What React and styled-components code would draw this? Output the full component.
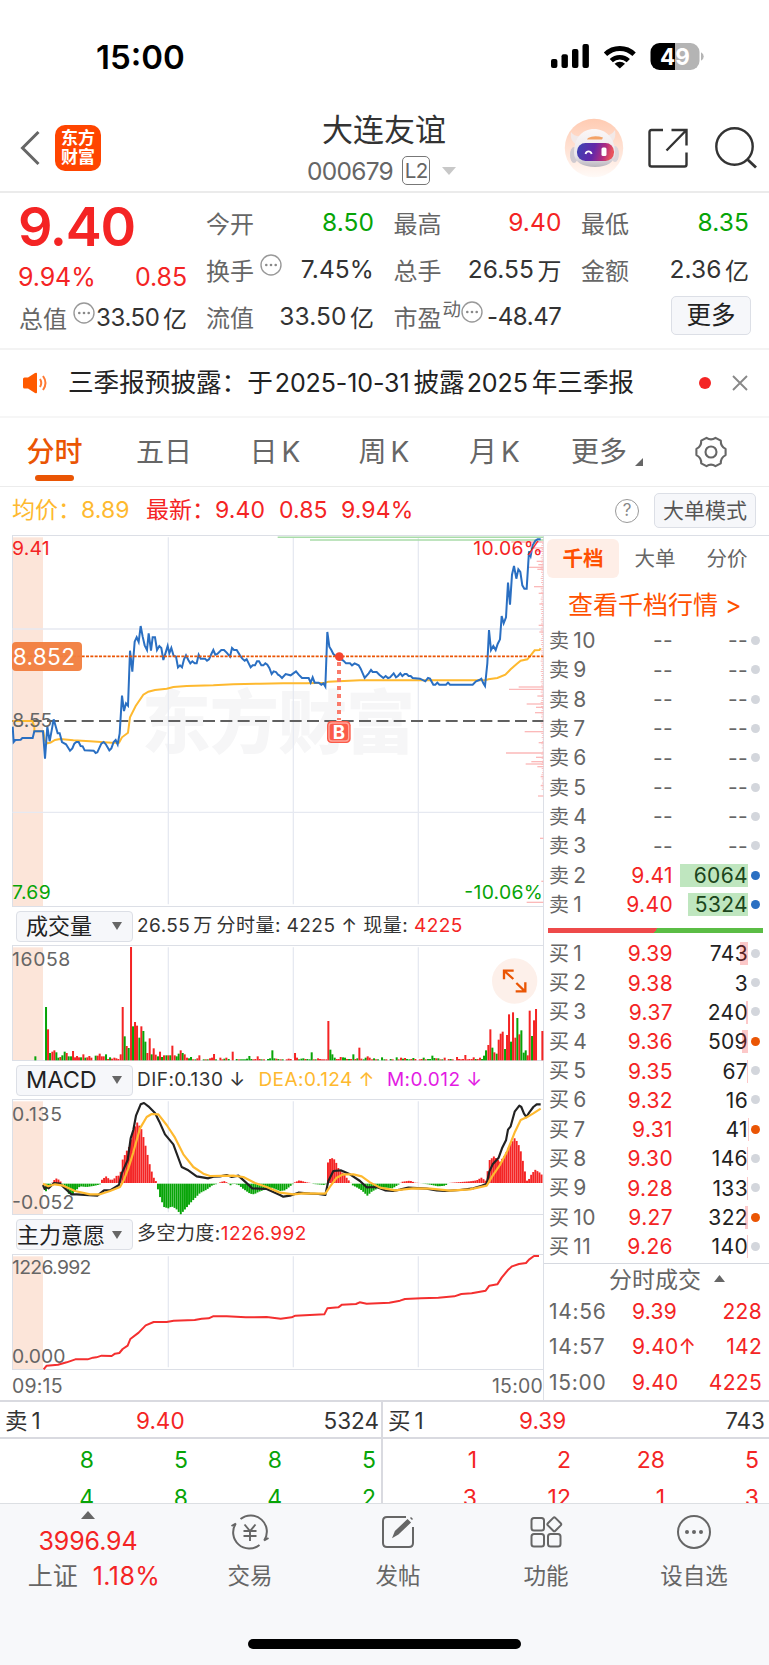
import React from 'react';
import styled, { createGlobalStyle, css } from 'styled-components';

const RED = '#f42424';
const GREEN = '#07a407';
const ORANGE = '#ea5504';
const GOLD = '#feb92f';

const quoteCells = [
    { label: '今开', value: '8.50', color: GREEN },
    { label: '最高', value: '9.40', color: RED },
    { label: '最低', value: '8.35', color: GREEN },
    { label: '换手', value: '7.45%', hint: true },
    { label: '总手', value: '26.55', unit: '万' },
    { label: '金额', value: '2.36', unit: '亿' },
    { label: '流值', value: '33.50', unit: '亿' },
    { label: '市盈', value: '-48.47', hint: true, sup: '动', tight: true },
];

const asks = [
    ...[10, 9, 8, 7, 6, 5, 4, 3].map(n => ({ n, price: '--', volume: '--', empty: true, dot: '#d3d6dc' })),
    { n: 2, price: '9.41', volume: '6064', bar: 68, dot: '#2a6fc2' },
    { n: 1, price: '9.40', volume: '5324', bar: 60, dot: '#2a6fc2' },
];

const bids = [
    ['9.39', 743, 8], ['9.38', 3, 0], ['9.37', 240, 2], ['9.36', 509, 6, true],
    ['9.35', 67, 1], ['9.32', 16, 0], ['9.31', 41, 0.5, true], ['9.30', 146, 1],
    ['9.28', 133, 1], ['9.27', 322, 3, true], ['9.26', 140, 1],
].map(([price, volume, bar, hot], i) => ({ n: i + 1, price, volume, bar, dot: hot ? '#ea5504' : '#d3d6dc' }));

const trades = [
    { time: '14:56', price: '9.39', volume: '228' },
    { time: '14:57', price: '9.40↑', volume: '142' },
    { time: '15:00', price: '9.40', volume: '4225' },
];

// chart coordinates are in thirds of a pixel
const priceLine = '38,590 41,636 46,630 62,629 67,624 98,624 103,604 129,604 135,686 142,590 149,634 161,568 173,610 179,610 186,636 198,643 210,662 217,655 223,641 229,636 236,636 242,648 248,649 254,661 281,662 287,669 292,667 304,641 311,636 317,642 328,661 334,655 341,636 347,630 353,643 359,610 366,497 372,543 378,520 384,527 390,362 397,425 404,335 410,322 416,336 422,288 428,320 434,346 441,360 446,310 453,362 458,322 465,322 471,360 478,348 484,354 490,390 497,368 503,348 508,370 514,354 521,378 528,380 534,412 540,406 546,412 552,388 558,376 565,390 571,400 577,394 584,400 590,400 596,374 602,386 615,386 621,392 627,388 634,372 640,360 646,374 652,372 664,360 672,360 680,368 690,380 696,354 702,360 710,360 720,376 727,386 734,392 740,388 746,400 752,412 758,406 765,406 771,394 777,394 784,406 790,406 796,400 802,404 808,414 815,432 821,424 828,426 834,434 838,436 846,444 857,432 865,434 872,436 880,430 888,424 896,434 906,444 926,444 932,458 938,442 944,458 956,458 964,464 970,460 976,470 982,306 988,350 994,360 1000,372 1010,380 1030,392 1038,400 1050,400 1056,406 1064,400 1076,406 1082,416 1094,444 1106,430 1113,420 1118,426 1130,426 1138,434 1150,444 1157,438 1164,444 1170,442 1181,430 1188,442 1194,438 1201,430 1207,438 1214,432 1220,432 1226,438 1232,438 1238,444 1260,446 1276,454 1284,444 1290,446 1300,464 1306,464 1312,458 1318,464 1338,464 1344,458 1350,464 1418,464 1428,454 1438,450 1444,446 1450,460 1455,468 1462,400 1467,300 1473,360 1480,348 1487,360 1493,342 1500,328 1505,258 1511,280 1518,262 1524,158 1530,224 1536,134 1542,108 1549,146 1555,118 1561,126 1567,166 1573,176 1580,176 1587,64 1592,78 1598,46 1606,32 1613,28 1622,28';
const avgLine = '38,573 97,573 103,590 103,604 130,604 134,630 142,640 152,638 165,630 180,627 220,631 270,634 335,638 357,638 366,622 384,608 390,562 407,528 430,494 445,485 465,480 500,476 520,471 560,468 640,466 700,463 780,461 850,460 920,460 976,458 985,455 1080,451 1455,451 1465,448 1492,444 1516,434 1532,418 1550,402 1562,392 1582,388 1592,376 1604,361 1618,360 1622,355';
const difLine = '129,840 134,852 140,846 146,850 162,834 180,836 195,850 214,868 230,868 292,872 312,856 330,856 357,840 365,806 383,765 392,700 400,675 408,632 422,598 432,594 445,604 465,624 478,650 495,688 520,718 545,786 565,796 590,814 625,820 640,815 660,814 680,810 695,816 715,812 735,830 757,850 800,852 840,870 850,875 870,872 895,863 930,866 955,867 976,870 985,828 1000,798 1022,796 1050,808 1080,828 1100,847 1130,846 1155,856 1180,858 1200,854 1225,848 1280,851 1310,856 1335,858 1380,855 1420,850 1445,842 1460,836 1468,800 1478,778 1496,758 1506,730 1518,706 1524,674 1532,664 1544,620 1558,602 1564,606 1572,626 1579,636 1588,622 1600,606 1610,598 1622,598';
const deaLine = '129,836 145,844 165,838 190,842 225,858 270,868 300,868 330,858 360,846 372,824 385,790 400,742 420,670 440,636 455,627 475,628 500,660 525,698 550,748 580,786 610,806 630,813 700,812 730,816 765,834 800,846 840,863 880,868 910,865 976,866 990,845 1010,818 1030,808 1060,808 1085,814 1110,832 1140,848 1185,856 1240,850 1290,851 1350,857 1410,853 1460,842 1478,812 1500,780 1522,738 1545,680 1562,645 1580,637 1600,625 1622,611';
const willLine = '131,463 140,452 174,449 200,442 226,433 263,433 279,428 289,427 305,422 335,423 345,416 358,414 368,402 383,392 391,372 416,353 437,331 461,321 500,321 521,317 584,315 605,311 626,310 639,304 680,304 737,307 800,306 842,311 875,307 886,302 973,298 982,280 1015,277 1026,269 1068,267 1079,262 1100,266 1168,263 1200,257 1215,252 1263,250 1315,248 1363,244 1384,237 1415,235 1457,227 1468,212 1492,208 1505,188 1523,166 1536,154 1557,147 1578,144 1587,134 1602,123 1617,123';

const volumeData = `106g12 138g160 144r93 150g22 157r26 163r30 169g24 175g8 181r10 187g15 194g26 200r22 206g12 213g12 219r28 225r9
231r13 237r9 243g9 250r18 256g8 262r9 268r13 274r8 287g14 293r14 299r20 305r12 311r12 318g18 324r4 330g9 336r5 343r8
349r6 355r4 362r18 368r160 374g72 380r43 386g37 393r340 399g102 405r115 411r104 418g68 424r102 430g88 436g56 442r22
449r66 455g18 461r36 467r17 474g12 480r26 486g10 492r15 499g15 505r15 511g15 517r44 524r15 530g12 536g20 542r30 548g22
554r18 561r8 567g6 573g10 579r3 586g3 592r6 598r15 611g3 617r3 623g3 630r6 636r8 642r19 648g3 661r8 667r3 673g5 679r8
686g4 698r26 710g4 717r3 723g3 729g3 735g3 741g5 748g13 754g4 760r3 766r4 773r12 779r4 785g3 792r3 804g4 810g6 817g30
823g6 829r5 835g4 842r3 848g3 860r3 866r5 872r4 885r22 891r8 897g3 904g5 910g6 916r4 922g4 929g3 935g24 941r3 947g3
954r6 960r4 966r3 972r3 979r3 985r118 991g32 997g18 1004g8 1010r4 1016r4 1022r10 1029g9 1035g8 1041r4 1047g4 1053r4
1060g18 1066r4 1072g6 1078r38 1084r5 1091g3 1097g8 1103r12 1109r8 1116r3 1122g6 1128r3 1134g3 1146g9 1153g3 1159r3
1172g4 1178r3 1190g9 1196r3 1203r8 1209g5 1215r7 1221g4 1228g3 1234r4 1240g7 1246r4 1259r3 1265r4 1271g8 1277r3 1284g4
1290g4 1297g14 1303g7 1309r6 1315g6 1321r3 1327g3 1334r8 1346r4 1352g4 1358r3 1371r10 1377r4 1383r3 1389r4 1396r16
1402r3 1408r4 1415r4 1421r9 1427g4 1433r4 1440r8 1446g4 1452g14 1458g30 1465r46 1471r93 1477g38 1483r24 1490g20 1496r62
1502r80 1508r86 1515g34 1521r76 1527r138 1533g56 1539r144 1546r68 1552g127 1558r78 1564g90 1571g23 1577g30 1583r15
1589r149 1596g73 1602r120 1608r154 1627r88`;

const histogram = [
    [130, 0], [136, -28], [142, -12], [152, -6], [160, 6], [168, 14], [176, 10], [184, 2], [190, -4], [198, -10], [206, -30],
    [218, -34], [228, -20], [240, -8], [260, -10], [280, -7], [298, -3], [303, 0], [306, 10], [318, 20], [330, 10], [340, 10],
    [350, 22], [360, 22], [368, 70], [380, 96], [388, 110], [400, 160], [412, 182], [425, 160], [437, 110], [450, 52],
    [460, 18], [470, 2], [472, -10], [480, -40], [492, -70], [505, -74], [515, -68], [528, -75], [542, -92], [556, -76],
    [575, -54], [600, -28], [620, -18], [638, -4], [655, 0], [672, 6], [684, 0], [692, -5], [700, 0], [716, -4], [730, -16],
    [750, -30], [762, -32], [775, -25], [800, -16], [815, -12], [840, -22], [855, -20], [870, -8], [880, 0], [898, 8],
    [920, 2], [940, -1], [975, -4], [980, 0], [983, 60], [990, 72], [998, 75], [1006, 68], [1014, 46], [1025, 34], [1035, 22],
    [1046, 8], [1056, -4], [1072, -12], [1085, -20], [1102, -36], [1115, -24], [1135, -13], [1160, -12], [1178, -14],
    [1195, -3], [1208, 4], [1230, 7], [1245, 1], [1275, -1], [1285, -2], [1300, -5], [1315, -8], [1335, -6], [1345, 0],
    [1370, 2], [1410, 5], [1430, 8], [1444, 16], [1458, 6], [1462, 30], [1468, 68], [1482, 80], [1500, 64], [1515, 84],
    [1528, 112], [1545, 136], [1560, 106], [1570, 60], [1578, 18], [1583, 0], [1590, 20], [1605, 40], [1618, 32], [1630, 20],
];

const chips = [
    [36, 96], [54, 40], [64, 20], [94, 20], [104, 15], [112, 43], [118, 18], [170, 28], [190, 14], [222, 12], [286, 14],
    [306, 12], [471, 74], [478, 103], [498, 18], [522, 50], [532, 22], [548, 25], [573, 16], [605, 56], [638, 14], [669, 112],
    [682, 22], [695, 36], [702, 53], [710, 18], [740, 8], [767, 8], [798, 16], [925, 10], [1054, 6], [1117, 50],
];

const volumeBars = volumeData.split(/\s+/).map(item => {
    const [, x, side, h] = item.match(/(\d+)([rg])(\d+)/);
    return { x: +x, h: +h, color: side === 'r' ? RED : GREEN };
});

const valueAt = (points, x) => {
    const i = points.findIndex(([px]) => px >= x);
    if (i <= 0) return 0;
    const [x0, v0] = points[i - 1];
    const [x1, v1] = points[i];
    return v0 + ((v1 - v0) * (x - x0)) / (x1 - x0);
};

const histBars = Array.from({ length: 240 }, (_, i) => {
    const x = 138 + i * 6.22;
    return { x, v: valueAt(histogram, x) };
});

function Grid({ top, bottom }) {
    return (
        <g>
            <rect x="37" y={top + 7} width="92" height={bottom - top - 9} fill="#fce5d9" />
            {[505, 880, 1255].map(x => (
                <path key={x} d={`M${x} ${top + 7}V${bottom - 8}`} stroke="#e6e9f1" strokeWidth="4" />
            ))}
            <path d={`M37.5 ${top}V${bottom}`} stroke="#dcdfe6" strokeWidth="3" />
            <path d={`M36 ${top + 1.5}H1632M36 ${bottom - 1.5}H1632`} stroke="#dcdfe6" strokeWidth="3" />
        </g>
    );
}

function PriceChart() {
    return (
        <Chart height={372} viewBox="36 15 1596 1116">
            <Watermark x="425" y="653" textLength="820">东方财富</Watermark>
            <Grid top={15} bottom={1131} />
            <path d="M37 297H1630M37 847H1630" stroke="#e6e9f1" strokeWidth="4" />
            <path d="M833 22H1630M930 30H1630" stroke="#a9dca9" strokeWidth="4.5" />
            {chips.map(([y, w]) => (
                <path key={y} d={`M${1630 - w} ${y}H1630`} stroke="#fbb9b9" strokeWidth="4" />
            ))}
            {Array.from({ length: 120 }, (_, i) => (
                <path key={i} d={`M${1628 - ((i * 7) % 5) - (i < 90 ? 2 : 0)} ${40 + i * 6.2}H1630`} stroke="#fbb9b9" strokeWidth="3" />
            ))}
            <path d="M37 573H1630" stroke="#606060" strokeWidth="6" strokeDasharray="36 16" />
            <polyline points={avgLine} fill="none" stroke={GOLD} strokeWidth="6" />
            <polyline points={priceLine} fill="none" stroke="#2a6fc2" strokeWidth="6" />
            <path d="M37 379H1630" stroke={ORANGE} strokeWidth="5.5" strokeDasharray="9 4" />
            <path d="M1017 396V570" stroke="#fa7b6b" strokeWidth="12" strokeDasharray="12 12" />
            <circle cx="1018" cy="380" r="13" fill="#f5442f" />
            <rect x="981" y="573" width="71" height="66" rx="13" fill="#fb5b49" />
            <rect x="987" y="579" width="59" height="54" rx="9" fill="none" stroke="#ffa79c" strokeWidth="4" />
            <BuyMark x="1017" y="626">B</BuyMark>
            <ChartText x="36" y="74" fill={RED} textLength="113">9.41</ChartText>
            <ChartText x="36" y="1107" fill={GREEN} textLength="116">7.69</ChartText>
            <ChartText x="37" y="590" fill="#666" textLength="120">8.55</ChartText>
            <ChartText x="1628" y="74" fill={RED} textAnchor="end" textLength="208">10.06%</ChartText>
            <ChartText x="1628" y="1107" fill={GREEN} textAnchor="end" textLength="235">-10.06%</ChartText>
            <rect x="36" y="336" width="210" height="87" rx="12" fill="#f17f40" fillOpacity=".96" />
            <PriceTag x="38" y="405" textLength="187">8.852</PriceTag>
        </Chart>
    );
}

function VolumeChart() {
    return (
        <Chart height={116} viewBox="36 120 1596 348">
            <Grid top={120} bottom={468} />
            {volumeBars.map(({ x, h, color }) => (
                <rect key={x} x={x - 2.9} y={466 - h} width="6" height={h} fill={color} />
            ))}
            <ChartText x="36" y="184" textLength="175">16058</ChartText>
            <circle cx="1544" cy="228" r="68" fill="#fdf0ea" />
            <path d="M1540 222L1513 198M1512 223V197H1541M1549 234L1575 259M1547 259H1576V232" fill="none" stroke={ORANGE} strokeWidth="7" />
        </Chart>
    );
}

function MacdChart() {
    return (
        <Chart height={116} viewBox="36 582 1596 348">
            <Grid top={582} bottom={930} />
            {histBars.map(({ x, v }) => (
                <rect
                    key={x}
                    x={x - 2.9}
                    y={v > 0 ? 834 - v : 836}
                    width="5.8"
                    height={Math.abs(v)}
                    fill={v > 0 ? RED : GREEN}
                />
            ))}
            <ChartText x="36" y="647" textLength="150">0.135</ChartText>
            <ChartText x="36" y="911" textLength="187">-0.052</ChartText>
            <polyline points={difLine} fill="none" stroke="#222" strokeWidth="6.5" strokeLinejoin="round" />
            <polyline points={deaLine} fill="none" stroke={GOLD} strokeWidth="6.5" strokeLinejoin="round" />
        </Chart>
    );
}

function WillChart() {
    return (
        <Chart height={116} viewBox="36 117 1596 348">
            <Grid top={117} bottom={465} />
            <ChartText x="36" y="176" textLength="238">1226.992</ChartText>
            <ChartText x="36" y="445" textLength="160">0.000</ChartText>
            <polyline points={willLine} fill="none" stroke="#f42f2f" strokeWidth="6" strokeLinejoin="round" />
        </Chart>
    );
}

function HintIcon() {
    return (
        <Hint width="22" height="22" viewBox="0 0 22 22">
            <circle cx="11" cy="11" r="10" fill="none" stroke="#999" strokeWidth="1.4" />
            <circle cx="6.3" cy="11" r="1.3" fill="#888" />
            <circle cx="11" cy="11" r="1.3" fill="#888" />
            <circle cx="15.7" cy="11" r="1.3" fill="#888" />
        </Hint>
    );
}

function Cell({ label, value, unit, color, hint, sup, tight }) {
    return (
        <QuoteCell>
            <CellLabel>{label}</CellLabel>
            {sup && <Sup>{sup}</Sup>}
            {hint && <HintIcon />}
            <CellValue color={color} tight={tight}>
                {value}
                {unit && <Unit>{unit}</Unit>}
            </CellValue>
        </QuoteCell>
    );
}

function BookRow({ side, n, price, volume, bar, dot, empty }) {
    return (
        <Level>
            <LevelName>{side}<b>{n}</b></LevelName>
            <LevelPrice empty={empty}>{price}</LevelPrice>
            <LevelVolume empty={empty}>
                {volume}
                {bar > 0 && <VolumeBar side={side} style={{ width: bar }} />}
            </LevelVolume>
            <Dot color={dot} />
        </Level>
    );
}

function StatusIcons() {
    return (
        <svg width="156" height="30" viewBox="550 43 156 30">
            <rect x="551" y="60" width="6.4" height="9" rx="2" />
            <rect x="561.5" y="55.3" width="6.4" height="13.7" rx="2" />
            <rect x="572" y="50" width="6.4" height="19" rx="2" />
            <rect x="582.5" y="45" width="6.4" height="24" rx="2" />
            <path d="M605.5 55.3a20.5 20.5 0 0 1 28.6 0" fill="none" stroke="#000" strokeWidth="4.8" />
            <path d="M611.3 61.6a12.3 12.3 0 0 1 17 0" fill="none" stroke="#000" strokeWidth="4.6" />
            <path d="M614.6 64.8a7.4 7.4 0 0 1 10.4 0L619.8 69.6z" />
            <path d="M675 44v27h-15.5a9 9 0 0 1-9-9v-9a9 9 0 0 1 9-9z" />
            <path d="M675 44h15.5a9 9 0 0 1 9 9v9a9 9 0 0 1-9 9H675z" fill="#b4b4b4" />
            <path d="M701 53.3a4.6 4.6 0 0 1 0 8.4z" fill="#b4b4b4" />
            <BatteryText x="675" y="65.5">49</BatteryText>
        </svg>
    );
}

function Robot() {
    return (
        <svg width="60" height="60" viewBox="0 0 60 60">
            <defs>
                <linearGradient id="halo" x1="0" y1="0" x2="0" y2="1">
                    <stop offset="0" stopColor="#ffcbb2" />
                    <stop offset=".65" stopColor="#ffe8dd" />
                    <stop offset="1" stopColor="#fffaf7" />
                </linearGradient>
                <linearGradient id="visor" x1="0" y1="0" x2="1" y2=".15">
                    <stop offset="0" stopColor="#3a46b4" />
                    <stop offset=".5" stopColor="#6427a8" />
                    <stop offset=".8" stopColor="#b52c7e" />
                    <stop offset="1" stopColor="#e8545c" />
                </linearGradient>
                <linearGradient id="shell" x1="0" y1="0" x2="0" y2="1">
                    <stop offset="0" stopColor="#fbf7f7" />
                    <stop offset=".7" stopColor="#e9e6ea" />
                    <stop offset="1" stopColor="#b9b4bc" />
                </linearGradient>
            </defs>
            <circle cx="30" cy="30" r="29.2" fill="url(#halo)" />
            <path d="M7 14c-1 6 1 11 7 13l5-9c-6 1-9 0-12-4zM51 12c1 6 0 11-6 14l-6-8c6 0 9-2 12-6z" fill="#f2e9e8" />
            <ellipse cx="10" cy="37" rx="4" ry="8" fill="#cfcad0" />
            <ellipse cx="51" cy="36" rx="4" ry="8" fill="#dcd6da" />
            <path d="M10 35c0-15 8-24 20-24s21 9 21 24c0 9-8 14-20 14s-21-5-21-14z" fill="url(#shell)" />
            <path d="M24 20q6-3 15-.5l-1 2H23z" fill="#f3a267" />
            <rect x="13" y="25" width="37" height="18" rx="8.5" fill="url(#visor)" />
            <path d="M21.5 36c1-3.5 5-3.5 6.2 0" fill="none" stroke="#fff" strokeWidth="1.8" />
            <rect x="37.5" y="29.5" width="5" height="8.5" rx="1.5" fill="#fff" />
        </svg>
    );
}

function App() {
    return (
        <Screen>
            <GlobalStyle />
            <StatusBar>
                <Clock>15:00</Clock>
                <StatusIcons />
            </StatusBar>

            <Header>
                <svg width="22" height="38" viewBox="0 0 22 38">
                    <path d="M18.5 3L2.5 19l16 16" fill="none" stroke="#666" strokeWidth="3" />
                </svg>
                <Logo><span>东方</span><span>财富</span></Logo>
                <Title>
                    <Name>大连友谊</Name>
                    <Code>
                        000679
                        <Level2>L2</Level2>
                        <svg width="14" height="8" viewBox="0 0 14 8"><path d="M0 0h14L7 8z" fill="#c8c8c8" /></svg>
                    </Code>
                </Title>
                <Tools>
                    <Robot />
                    <svg width="42" height="42" viewBox="0 0 42 42" fill="none" stroke="#333" strokeWidth="2.4">
                        <path d="M16 3H4.5Q2.5 3 2.5 5v32.5q0 2 2 2h33q2 0 2-2V25.5M24.5 3h15v15.5M39 3.5L19.5 23.5" />
                    </svg>
                    <svg width="44" height="44" viewBox="0 0 44 44" fill="none" stroke="#333" strokeWidth="2.4">
                        <circle cx="20.5" cy="20.5" r="18.2" />
                        <path d="M33 33l9 8.5" strokeWidth="2.8" />
                    </svg>
                </Tools>
            </Header>

            <Quote>
                <QuoteMain>
                    <BigPrice>9.40</BigPrice>
                    <Change><span>9.94%</span><span>0.85</span></Change>
                    <Cell label="总值" value="33.50" unit="亿" hint tight />
                </QuoteMain>
                <QuoteGrid>
                    {quoteCells.map(cell => <Cell key={cell.label} {...cell} />)}
                    <MoreButton>更多</MoreButton>
                </QuoteGrid>
            </Quote>

            <News>
                <svg width="26" height="24" viewBox="0 0 26 24">
                    <path d="M1 8q0-1.5 1.5-1.5H6L13 2q2-1 2 .8v18.4q0 1.8-2 .8L6 17.5H2.5Q1 17.5 1 16z" fill="#ff5a00" />
                    <path d="M18 8q2.5 4 0 8M21 5q5 7 0 14" fill="none" stroke="#ff7a33" strokeWidth="2" />
                </svg>
                <NewsText>三季报预披露：于<Num>2025-10-31</Num>披露<Num>2025</Num>年三季报</NewsText>
                <NewsDot />
                <svg width="16" height="16" viewBox="0 0 16 16"><path d="M1 1l14 14M15 1L1 15" stroke="#888" strokeWidth="1.9" /></svg>
            </News>

            <Tabs>
                <Tab active>分时</Tab>
                <Tab>五日</Tab>
                <Tab>日<i>K</i></Tab>
                <Tab>周<i>K</i></Tab>
                <Tab>月<i>K</i></Tab>
                <Tab>更多<Corner /></Tab>
                <svg width="34" height="32" viewBox="-17 -16 34 32" fill="none" stroke="#666" strokeWidth="2.1">
                    <circle r="5.5" />
                    <path d="M-4.5-14.2q4.5 3.2 9 0l5.3 2.9q-.3 5.6 4.8 8.2v6.2q-5.1 2.6-4.8 8.2l-5.3 2.9q-4.5-3.2-9 0l-5.3-2.9q.3-5.6-4.8-8.2v-6.2q5.1-2.6 4.8-8.2z" strokeLinejoin="round" />
                </svg>
            </Tabs>

            <InfoBar>
                <InfoItem width={134} color={GOLD}>均价：<em>8.89</em></InfoItem>
                <InfoItem width={133} color={RED}>最新：<em>9.40</em></InfoItem>
                <InfoItem width={62} color={RED}><em>0.85</em></InfoItem>
                <InfoItem color={RED}><em>9.94%</em></InfoItem>
                <Help>?</Help>
                <ModeButton>大单模式</ModeButton>
            </InfoBar>

            <Body>
                <Charts>
                    <PriceChart />
                    <IndicatorBar height={38}>
                        <Picker inset={9}>成交量<Caret /></Picker>
                        <Reading>26.55<Wan>万</Wan> 分时量: 4225 ↑ 现量: <Tint color={RED}>4225</Tint></Reading>
                    </IndicatorBar>
                    <VolumeChart />
                    <IndicatorBar height={38}>
                        <Picker inset={9} latin>MACD<Caret /></Picker>
                        <Reading>DIF:0.130 ↓</Reading>
                        <Reading offset={13}><Tint color={GOLD}>DEA:0.124 ↑</Tint></Reading>
                        <Reading offset={12}><Tint color="#e31be3">M:0.012 ↓</Tint></Reading>
                    </IndicatorBar>
                    <MacdChart />
                    <IndicatorBar height={39}>
                        <Picker inset={0}>主力意愿<Caret /></Picker>
                        <Reading>多空力度:<Tint color={RED}>1226.992</Tint></Reading>
                    </IndicatorBar>
                    <WillChart />
                    <TimeAxis><span>09:15</span><span>15:00</span></TimeAxis>
                </Charts>

                <Side>
                    <SideTabs>
                        <SideTab active>千档</SideTab>
                        <SideTab>大单</SideTab>
                        <SideTab>分价</SideTab>
                    </SideTabs>
                    <DepthLink>查看千档行情 <span>&gt;</span></DepthLink>
                    {asks.map(row => <BookRow key={row.n} side="卖" {...row} />)}
                    <Ratio />
                    {bids.map(row => <BookRow key={row.n} side="买" {...row} />)}
                    <TradesTitle>
                        分时成交
                        <svg width="11" height="7" viewBox="0 0 11 7"><path d="M0 7h11L5.5 0z" fill="#666" /></svg>
                    </TradesTitle>
                    {trades.map(t => (
                        <Trade key={t.time}>
                            <TradeTime>{t.time}</TradeTime>
                            <span>{t.price}</span>
                            <TradeVolume>{t.volume}</TradeVolume>
                        </Trade>
                    ))}
                </Side>
            </Body>

            <Queues>
                <Queue>
                    <QueueHead><span>卖<b>1</b></span><Tint color={RED}>9.40</Tint><span>5324</span></QueueHead>
                    <QueueGrid color={GREEN}>
                        {[8, 5, 8, 5, 4, 8, 4, 2].map((n, i) => <span key={i}>{n}</span>)}
                    </QueueGrid>
                </Queue>
                <Queue>
                    <QueueHead><span>买<b>1</b></span><Tint color={RED}>9.39</Tint><span>743</span></QueueHead>
                    <QueueGrid color={RED}>
                        {[1, 2, 28, 5, 3, 12, 1, 3].map((n, i) => <span key={i}>{n}</span>)}
                    </QueueGrid>
                </Queue>
            </Queues>

            <Footer>
                <IndexBox>
                    <svg width="14" height="8" viewBox="0 0 14 8"><path d="M0 8h14L7 0z" fill="#666" /></svg>
                    <IndexValue>3996.94</IndexValue>
                    <IndexName>上证<em>1.18%</em></IndexName>
                </IndexBox>
                <Action>
                    <svg width="44" height="40" viewBox="-22 -20 44 40" fill="none" stroke="#666" strokeWidth="2">
                        <path d="M-9.5-13A16.2 16.2 0 0 1 14.2 8.5L18.5 6M9.5 13A16.2 16.2 0 0 1-14.2-8.5L-18.5-6" />
                        <path d="M-5.5-7.5L0-1l5.5-6.5M0-1V9M-6.5-1h13M-6.5 4h13" strokeWidth="1.9" />
                    </svg>
                    交易
                </Action>
                <Action>
                    <svg width="44" height="40" viewBox="-22 -20 44 40" fill="none" stroke="#666" strokeWidth="2">
                        <path d="M8-15h-19q-4 0-4 4v22q0 4 4 4h22q4 0 4-4V-5" />
                        <path d="M-4.5 4.5L-2.5-.5 9.5-12l2.5 2.5L0 1.8zM12.5-14.5l2 2" fill="#666" strokeWidth="1.5" />
                    </svg>
                    发帖
                </Action>
                <Action>
                    <svg width="44" height="40" viewBox="-22 -20 44 40" fill="none" stroke="#666" strokeWidth="2">
                        <rect x="-14.5" y="-14" width="12.5" height="12.5" rx="2.5" />
                        <rect x="-14.5" y="2" width="12.5" height="12.5" rx="2.5" />
                        <rect x="2" y="2" width="12.5" height="12.5" rx="2.5" />
                        <rect x="3" y="-13" width="10.6" height="10.6" rx="1.5" transform="rotate(45 8.3 -7.7)" />
                    </svg>
                    功能
                </Action>
                <Action>
                    <svg width="44" height="40" viewBox="-22 -20 44 40">
                        <circle r="16" fill="none" stroke="#666" strokeWidth="2" />
                        <circle cx="-7" r="2" fill="#666" />
                        <circle r="2" fill="#666" />
                        <circle cx="7" r="2" fill="#666" />
                    </svg>
                    设自选
                </Action>
                <HomeBar />
            </Footer>
        </Screen>
    );
}

export default App;


const GlobalStyle = createGlobalStyle`
    * {
        box-sizing: border-box;
    }
    body {
        margin: 0;
        background: #fff;
    }
    svg {
        display: block;
        flex: none;
    }
    b, i, em {
        font-weight: inherit;
        font-style: normal;
    }
`;

const Screen = styled.div`
    display: flex;
    flex-direction: column;
    width: 769px;
    height: 1665px;
    overflow: hidden;
    font-family: Inter, "Noto Sans CJK SC", sans-serif;
    color: #333;
    white-space: nowrap;
`;

const StatusBar = styled.div`
    display: flex;
    justify-content: space-between;
    align-items: center;
    height: 110px;
    padding: 5px 63px 0 96px;
`;

const Clock = styled.div`
    font-size: 33px;
    font-weight: 600;
    color: #000;
`;

const BatteryText = styled.text`
    font: 700 22.5px Inter, sans-serif;
    fill: #fff;
    text-anchor: middle;
`;

const Header = styled.header`
    display: flex;
    align-items: center;
    height: 83px;
    padding: 0 11px 5px 20px;
    border-bottom: 2px solid #ebebeb;
`;

const Logo = styled.div`
    display: flex;
    flex-direction: column;
    justify-content: center;
    align-items: center;
    width: 46px;
    height: 46px;
    margin: 0 0 0 13px;
    border-radius: 10px;
    background: #ff4500;
    color: #fff;
    font-size: 17px;
    line-height: 19px;
    font-weight: 700;
`;

const Title = styled.div`
    display: flex;
    flex-direction: column;
    align-items: center;
    flex: 1;
    padding: 3px 0 0 103px;
`;

const Name = styled.div`
    height: 40px;
    margin-top: 3px;
    font-size: 31px;
    line-height: 36px;
`;

const Code = styled.div`
    display: flex;
    align-items: center;
    gap: 9px;
    height: 37px;
    padding-right: 5px;
    font-size: 24.5px;
    letter-spacing: -0.7px;
    color: #666;

    svg {
        margin-left: 3px;
    }
`;

const Level2 = styled.span`
    width: 28px;
    height: 29px;
    border: 1.5px solid #777;
    border-radius: 5px;
    text-align: center;
    font-size: 20.5px;
    line-height: 27px;
`;

const Tools = styled.div`
    display: flex;
    align-items: center;

    svg:nth-child(2) {
        margin-left: 23px;
    }
    svg:nth-child(3) {
        margin-left: 25px;
    }
`;

const Quote = styled.section`
    display: flex;
    gap: 19px;
    height: 157px;
    padding: 7px 20px 0 19px;
    border-bottom: 2px solid #f3f3f3;
`;

const QuoteMain = styled.div`
    width: 168px;
`;

const BigPrice = styled.div`
    height: 55px;
    margin-left: -1px;
    font-size: 54px;
    font-weight: 600;
    line-height: 54px;
    letter-spacing: -1.2px;
    color: ${RED};
`;

const Change = styled.div`
    display: flex;
    justify-content: space-between;
    height: 39px;
    margin-left: -1px;
    font-size: 25px;
    line-height: 44px;
    letter-spacing: -0.1px;
    color: ${RED};
`;

const QuoteGrid = styled.div`
    display: grid;
    grid-template-columns: repeat(3, 168px);
    grid-auto-rows: 47px;
    column-gap: 19.5px;
    margin-top: -1px;
`;

const QuoteCell = styled.div`
    display: flex;
    align-items: center;
    height: 47px;
    white-space: nowrap;
`;

const CellLabel = styled.span`
    font-size: 24px;
    color: #666;
`;

const Sup = styled.span`
    margin: 0 0 15px 1px;
    font-size: 18.5px;
    line-height: 20px;
    color: #666;
`;

const Hint = styled.svg`
    margin: 0 0 9px 6px;

    ${Sup} + & {
        margin-left: 0;
    }
`;

const CellValue = styled.span`
    flex: 1;
    display: flex;
    justify-content: flex-end;
    align-items: center;
    font-size: ${props => (props.tight ? 24 : 24.5)}px;
    letter-spacing: ${props => (props.tight ? -0.4 : 0.1)}px;
    color: ${props => props.color || '#333'};
`;

const Unit = styled.span`
    margin-left: 3.5px;
    font-size: 24px;
    letter-spacing: 0;
`;

const MoreButton = styled.button`
    justify-self: end;
    align-self: center;
    width: 80px;
    height: 39px;
    margin: 0 -2px 2px 0;
    padding: 0;
    border: 1.5px solid #dcdfe6;
    border-radius: 5px;
    background: #f6f7fa;
    font: inherit;
    font-size: 24.5px;
    line-height: 34px;
    color: #222;
`;

const News = styled.div`
    display: flex;
    align-items: center;
    height: 69px;
    padding: 1px 21px 1px 22px;
    border-bottom: 2px solid #f6f6f6;
`;

const NewsText = styled.div`
    flex: 1;
    margin-left: 20px;
    font-size: 25.6px;
    line-height: 36px;
    padding-bottom: 1px;
    color: #222;
`;

const Num = styled.span`
    margin: 0 4px 0 2px;
    font-size: 25px;
    letter-spacing: -0.1px;
`;

const NewsDot = styled.div`
    width: 12px;
    height: 12px;
    margin-right: 21px;
    border-radius: 50%;
    background: ${RED};
`;

const Tabs = styled.nav`
    display: grid;
    grid-template-columns: 109px 110px 112px 106px 115px 94px 1fr;
    align-items: center;
    justify-items: center;
    height: 69px;
    border-bottom: 1.5px solid #ececec;

    > svg {
        margin: -2px 0 0 7px;
    }
`;

const Tab = styled.div`
    position: relative;
    font-size: 28px;
    line-height: 69px;
    color: ${props => (props.active ? ORANGE : '#666')};

    i {
        margin-left: 4px;
    }

    ${props => props.active && css`
        font-weight: 500;

        &::after {
            content: '';
            position: absolute;
            left: calc(50% - 19px);
            bottom: 6px;
            width: 39px;
            height: 6px;
            border-radius: 3px;
            background: ${ORANGE};
        }
    `}
`;

const Corner = styled.span`
    position: absolute;
    right: -16px;
    bottom: 21px;
    border-left: 8px solid transparent;
    border-bottom: 8px solid #666;
`;

const InfoBar = styled.div`
    display: flex;
    align-items: center;
    height: 48px;
    padding: 0 13px 1px 12px;
`;

const InfoItem = styled.span`
    width: ${props => (props.width ? `${props.width}px` : 'auto')};
    font-size: 23px;
    line-height: 32px;
    padding-bottom: 1px;
    color: ${props => props.color};

    em {
        letter-spacing: 0.1px;
    }
`;

const Help = styled.div`
    width: 24px;
    height: 24px;
    margin-left: auto;
    border: 1.5px solid #999;
    border-radius: 50%;
    text-align: center;
    font-size: 17px;
    line-height: 21px;
    color: #888;
`;

const ModeButton = styled.button`
    width: 102px;
    height: 35px;
    margin-left: 15px;
    padding: 0;
    border: 1.5px solid #dcdfe6;
    border-radius: 5px;
    background: #f6f7fa;
    font: inherit;
    font-size: 21px;
    line-height: 30px;
    color: #555;
`;

const Body = styled.main`
    display: flex;
    height: 865px;
`;

const Charts = styled.div`
    width: 544px;
    padding-left: 12px;
    border-right: 1px solid #dcdfe6;
`;

const Chart = styled.svg`
    width: 532px;
    height: ${props => props.height}px;
`;

const ChartText = styled.text`
    font: 58px Inter, sans-serif;
    fill: ${props => props.fill || '#666'};
`;

const PriceTag = styled.text`
    font: 68px Inter, sans-serif;
    fill: #fff;
`;

const BuyMark = styled.text`
    font: 700 56px Inter, sans-serif;
    fill: #fff;
    text-anchor: middle;
`;

const Watermark = styled.text`
    font: 900 207px "Noto Sans CJK SC", sans-serif;
    fill: #f6f6f7;
`;

const IndicatorBar = styled.div`
    display: flex;
    align-items: center;
    height: ${props => props.height}px;
    padding-left: 4px;
`;

const Picker = styled.div`
    display: flex;
    align-items: center;
    justify-content: space-between;
    width: 117px;
    height: 31px;
    margin-right: 4px;
    padding: 0 10px 0 ${props => props.inset}px;
    border: 1.5px solid #dcdfe6;
    border-radius: 4px;
    background: #f6f7fa;
    font-size: ${props => (props.latin ? 23.5 : 22)}px;
    line-height: 28px;
    color: #222;
`;

const Caret = styled.span`
    border: 5px solid transparent;
    border-top: 8px solid #666;
    border-bottom: 0;
`;

const Reading = styled.span`
    margin-left: ${props => props.offset || 0}px;
    padding-bottom: 1px;
    font-size: 19px;
    line-height: 28px;
    letter-spacing: 0.45px;
    white-space: pre;
    color: #333;
`;

const Wan = styled.span`
    margin: 0 -2px 0 3px;
`;

const Tint = styled.span`
    color: ${props => props.color};
`;

const TimeAxis = styled.div`
    display: flex;
    justify-content: space-between;
    height: 30px;
    font-size: 19.5px;
    letter-spacing: 0.2px;
    line-height: 32px;
    color: #666;
`;

const Side = styled.aside`
    flex: 1;
    border-top: 1px solid #dcdfe6;
`;

const SideTabs = styled.div`
    display: grid;
    grid-template-columns: 72px 72px 72px;
    height: 42px;
    padding: 3px 0 0 3px;
`;

const SideTab = styled.div`
    height: 39px;
    border-radius: 6px;
    background: ${props => (props.active ? '#feeee7' : 'transparent')};
    color: ${props => (props.active ? '#ff5000' : '#666')};
    font-weight: ${props => (props.active ? 700 : 400)};
    font-size: 20.5px;
    line-height: 39px;
    text-align: center;
`;

const DepthLink = styled.div`
    height: 47.5px;
    padding-left: 24px;
    font-size: 25px;
    line-height: 54px;
    color: #ff5000;
`;

const Level = styled.div`
    display: grid;
    grid-template-columns: 60px 64px 75px 12px;
    align-items: center;
    height: 29.33px;
    padding-left: 5px;
    font-size: 21px;
    letter-spacing: 0.35px;
    line-height: 29px;
`;

const LevelName = styled.span`
    color: #666;
    font-size: 20px;

    b {
        margin-left: 4px;
        font-size: 21px;
    }
`;

const LevelPrice = styled.span`
    text-align: right;
    color: ${props => (props.empty ? '#666' : RED)};
`;

const LevelVolume = styled.span`
    position: relative;
    text-align: right;
    color: ${props => (props.empty ? '#666' : '#222')};
`;

const VolumeBar = styled.span`
    position: absolute;
    top: 3px;
    right: 0;
    height: 23px;
    background: ${props => (props.side === '卖' ? 'rgba(20, 164, 20, 0.27)' : 'rgba(244, 36, 36, 0.25)')};
`;

const Dot = styled.span`
    justify-self: end;
    width: 9px;
    height: 9px;
    margin-top: -1px;
    border-radius: 50%;
    background: ${props => props.color};
`;

const Ratio = styled.div`
    height: 5px;
    margin: 8.5px 6px 6px 4px;
    background: linear-gradient(125deg, #ee4a4a 50%, #5bbd45 50%);
`;

const TradesTitle = styled.div`
    display: flex;
    align-items: center;
    gap: 13px;
    height: 31px;
    margin-top: 2px;
    padding: 0 0 2px 65px;
    border-top: 1.5px solid #d6d9e0;
    font-size: 23px;
    color: #666;
`;

const Trade = styled.div`
    display: grid;
    grid-template-columns: 83px 60px 70px;
    height: 35.2px;
    padding-left: 5px;
    font-size: 21px;
    letter-spacing: 0.3px;
    line-height: 35px;
    color: ${RED};
`;

const TradeTime = styled.span`
    color: #666;
    letter-spacing: 0.7px;
`;

const TradeVolume = styled.span`
    text-align: right;
`;

const Queues = styled.section`
    display: flex;
    height: 103px;
    overflow: hidden;
    border-top: 2px solid #d9dae0;
`;

const Queue = styled.div`
    width: 383px;

    & + & {
        border-left: 2px solid #d9dae0;
        margin-left: -2px;
        width: 388px;
    }
`;

const QueueHead = styled.div`
    display: grid;
    grid-template-columns: 131px 100px 1fr;
    height: 37px;
    padding: 0 4px 0 5px;
    border-bottom: 2px solid #d9dae0;
    font-size: 22.5px;
    line-height: 38px;

    b {
        margin-left: 4px;
    }
    span:last-child {
        text-align: right;
    }
`;

const QueueGrid = styled.div`
    display: grid;
    grid-template-columns: repeat(4, 94px);
    grid-auto-rows: 38px;
    padding-top: 1px;
    font-size: 23px;
    line-height: 40px;
    text-align: right;
    color: ${props => props.color};
`;

const Footer = styled.footer`
    position: relative;
    display: grid;
    grid-template-columns: 176px 148px 148px 148px 148px;
    height: 162px;
    border-top: 1.5px solid #dcdfe3;
    background: #f7f8fa;
`;

const IndexBox = styled.div`
    display: flex;
    flex-direction: column;
    align-items: center;
    padding-top: 7px;
`;

const IndexValue = styled.div`
    margin-top: 3px;
    font-size: 25px;
    line-height: 38px;
    letter-spacing: -0.1px;
    color: ${RED};
`;

const IndexName = styled.div`
    display: flex;
    align-items: center;
    padding-left: 12px;
    font-size: 25px;
    line-height: 32px;
    color: #666;

    em {
        margin-left: 15px;
        font-size: 25px;
        letter-spacing: 0.4px;
        color: ${RED};
    }
`;

const Action = styled.div`
    display: flex;
    flex-direction: column;
    align-items: center;
    gap: 8px;
    padding-top: 8px;
    font-size: 22.5px;
    line-height: 32px;
    color: #666;
`;

const HomeBar = styled.div`
    position: absolute;
    left: 248px;
    bottom: 16px;
    width: 273px;
    height: 10px;
    border-radius: 5px;
    background: #000;
`;
